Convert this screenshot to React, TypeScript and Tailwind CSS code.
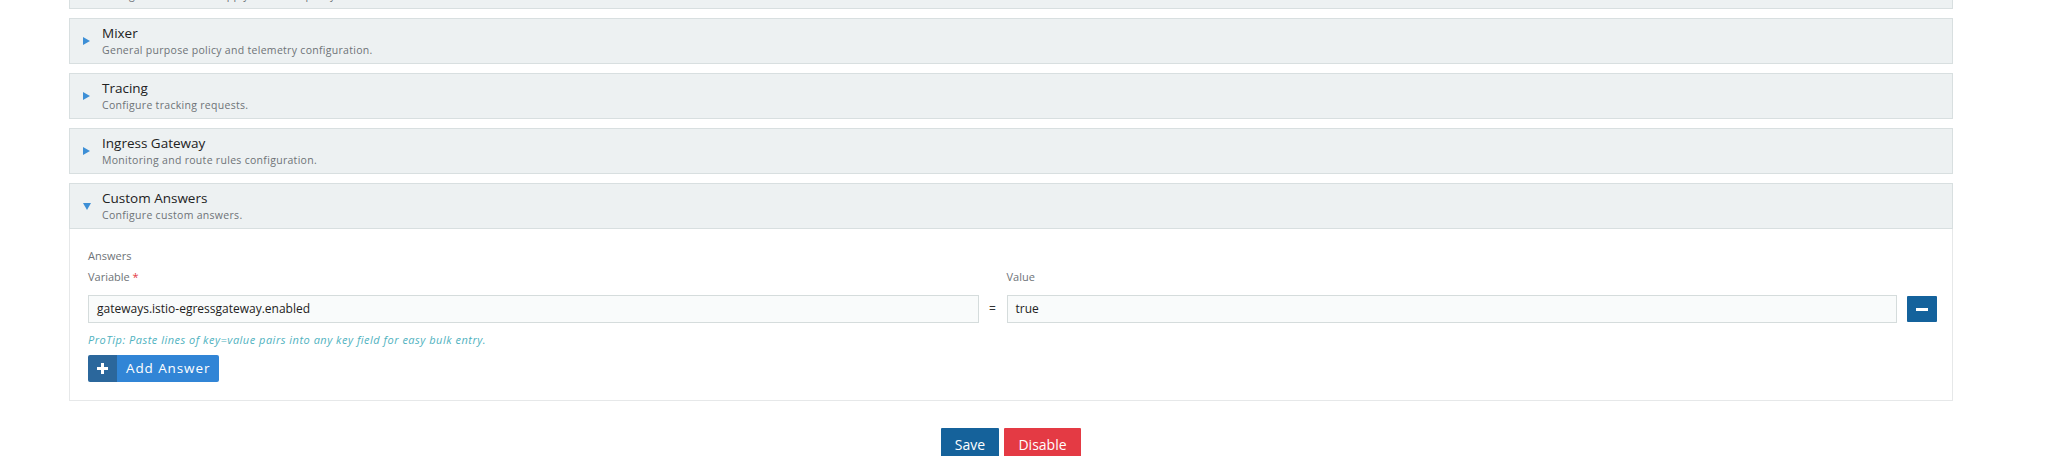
const font = { fontFamily: "'Open Sans', 'Liberation Sans', sans-serif" };

const sections = [
  { title: "Pilot", sub: "Configure Istio Pilot to apply the traffic policy." },
  { title: "Mixer", sub: "General purpose policy and telemetry configuration." },
  { title: "Tracing", sub: "Configure tracking requests." },
  { title: "Ingress Gateway", sub: "Monitoring and route rules configuration." },
];

const Caret = ({ open }: { open?: boolean }) =>
  open ? (
    <svg width="8" height="7" viewBox="0 0 8 7" className="shrink-0">
      <path d="M0 0 L8 0 L4 7 Z" fill="#3d8fd6" />
    </svg>
  ) : (
    <svg width="7" height="8" viewBox="0 0 7 8" className="shrink-0">
      <path d="M0 0 L7 4 L0 8 Z" fill="#3d8fd6" />
    </svg>
  );

const Header = ({ title, sub, open }: { title: string; sub: string; open?: boolean }) => (
  <div className="h-[46px] border border-[#d8dfe0] bg-[#edf1f2] flex items-center pl-[13px]">
    <div className="w-[19px] flex items-center">
      <Caret open={open} />
    </div>
    <div className="flex flex-col -mt-[1px]">
      <span className="text-[13.5px] leading-[18px] text-[#222]">{title}</span>
      <span className="text-[10.5px] leading-[16px] text-[#6e7377] tracking-[0.3px]">{sub}</span>
    </div>
  </div>
);

export default function App() {
  return (
    <div className="w-[2047px] h-[456px] overflow-hidden bg-white" style={font}>
      <div className="pl-[69px] pr-[94px] flex flex-col gap-[9px] -mt-[37px]">
        {sections.map((s) => (
          <Header key={s.title} title={s.title} sub={s.sub} />
        ))}

        <div>
          <Header title="Custom Answers" sub="Configure custom answers." open />
          <div className="border-x border-b border-[#e6e8e9] pl-[18px] pr-[15px] pt-[20px] pb-[18px]">
            <div className="text-[11px] leading-[14px] text-[#6e7377]">Answers</div>
            <div className="grid grid-cols-[1fr_28px_1fr_40px] mt-[7px]">
              <div className="text-[11px] leading-[14px] text-[#6e7377] mb-[11px]">
                Variable <span className="text-[#e43a44]">*</span>
              </div>
              <div />
              <div className="text-[11px] leading-[14px] text-[#6e7377]">Value</div>
              <div />
              <div className="h-[28px] border border-[#d5dcdc] bg-[#f9fbfb] flex items-center px-[8px] text-[12px] text-[#222]">
                gateways.istio-egressgateway.enabled
              </div>
              <div className="flex items-center justify-center text-[12px] text-[#333]">=</div>
              <div className="h-[28px] border border-[#d5dcdc] bg-[#f9fbfb] flex items-center px-[8px] text-[12px] text-[#222]">
                true
              </div>
              <div className="flex items-center justify-end">
                <button className="w-[30px] h-[26px] bg-[#14629c] flex items-center justify-center rounded-[1px]">
                  <span className="block w-[12px] h-[3px] bg-white" />
                </button>
              </div>
            </div>
            <div className="mt-[10px] text-[11px] leading-[14px] italic text-[#4fb2c0] tracking-[0.5px]">
              ProTip: Paste lines of key=value pairs into any key field for easy bulk entry.
            </div>
            <button className="mt-[8px] h-[27px] flex items-stretch rounded-[2px] overflow-hidden text-white">
              <span className="w-[29px] bg-[#2b679c] flex items-center justify-center">
                <svg width="11" height="11" viewBox="0 0 11 11">
                  <path d="M4 0 H7 V4 H11 V7 H7 V11 H4 V7 H0 V4 H4 Z" fill="#fff" />
                </svg>
              </span>
              <span className="w-[102px] bg-[#3185d6] flex items-center pl-[9px] text-[13.5px] tracking-[0.9px]">
                Add Answer
              </span>
            </button>
          </div>
        </div>

        <div className="flex justify-center gap-[5px] mt-[18px]">
          <button className="h-[32px] w-[58px] bg-[#15629b] text-white text-[14px] rounded-[1px]">Save</button>
          <button className="h-[32px] w-[77px] bg-[#e43a44] text-white text-[14px] rounded-[1px]">Disable</button>
        </div>
      </div>
    </div>
  );
}
